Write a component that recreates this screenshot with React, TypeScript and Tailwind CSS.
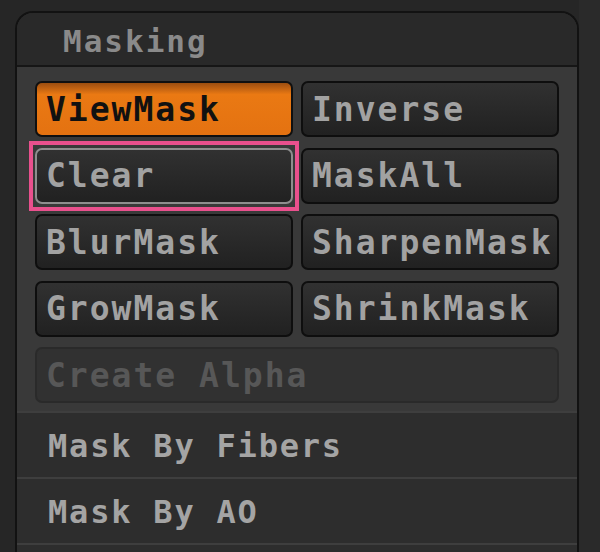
import React from 'react';

const font = { fontFamily: '"DejaVu Sans Mono", "Liberation Mono", monospace' };

interface MaskButtonProps {
  label: string;
  active?: boolean;
  focused?: boolean;
}

const MaskButton: React.FC<MaskButtonProps> = ({ label, active, focused }) => {
  const base =
    'relative h-[56px] flex items-center pl-[9px] pt-[1px] border-2 rounded-[7px] text-[33px] font-bold tracking-[2px] whitespace-nowrap';
  if (active) {
    return (
      <div
        className={`${base} border-[#101010] bg-gradient-to-b from-[#9c4e10] from-[0%] via-[#ea7913] via-[22%] to-[#e47211] text-[#111111]`}
        style={font}
      >
        {label}
      </div>
    );
  }
  return (
    <div
      className={`${base} ${focused ? 'border-[#8e8e8e] rounded-[3px]' : 'border-[#0e0e0e]'} bg-gradient-to-b from-[#313131] to-[#212121] text-[#a2a2a2]`}
      style={font}
    >
      {label}
      {focused && (
        <div className="absolute -left-[8px] -right-[8px] -top-[9px] -bottom-[9px] border-4 border-[#e9508d] pointer-events-none" />
      )}
    </div>
  );
};

const ListRow: React.FC<{ label: string }> = ({ label }) => (
  <div className="h-[66px] flex items-center pl-[31px] pt-[2px] border-t-2 border-[#3e3e3e] bg-[#2d2d2d]">
    <span className="text-[32px] font-bold tracking-[1.8px] text-[#a4a4a4]" style={font}>
      {label}
    </span>
  </div>
);

export default function App() {
  return (
    <div className="w-[600px] h-[552px] overflow-hidden bg-[#262626] flex">
      <div className="w-[564px] ml-[15px] mt-[11px] border-2 border-b-0 border-[#121212] rounded-t-[18px] overflow-hidden bg-[#2d2d2d] flex flex-col">
        <div className="h-[54px] bg-[#292929] border-b-2 border-[#161616] flex items-center pl-[46px] pt-[5px]">
          <span className="text-[31px] font-bold tracking-[2px] text-[#8a8a8a]" style={font}>
            Masking
          </span>
        </div>
        <div className="bg-[#393939] px-[18px] pt-[14px] pb-[8px] grid grid-cols-2 gap-x-[8px] gap-y-[10.5px]">
          <MaskButton label="ViewMask" active />
          <MaskButton label="Inverse" />
          <MaskButton label="Clear" focused />
          <MaskButton label="MaskAll" />
          <MaskButton label="BlurMask" />
          <MaskButton label="SharpenMask" />
          <MaskButton label="GrowMask" />
          <MaskButton label="ShrinkMask" />
          <div
            className="col-span-2 h-[56px] flex items-center pl-[9px] pt-[1px] border-2 border-[#2a2a2a] rounded-[7px] bg-[#313131] text-[33px] font-bold tracking-[2px] text-[#575757]"
            style={font}
          >
            Create Alpha
          </div>
        </div>
        <ListRow label="Mask By Fibers" />
        <ListRow label="Mask By AO" />
        <div className="border-t-2 border-[#3e3e3e] flex-1 bg-[#2d2d2d]" />
      </div>
      <div className="flex-1 bg-[#2a2a2a]" />
    </div>
  );
}
